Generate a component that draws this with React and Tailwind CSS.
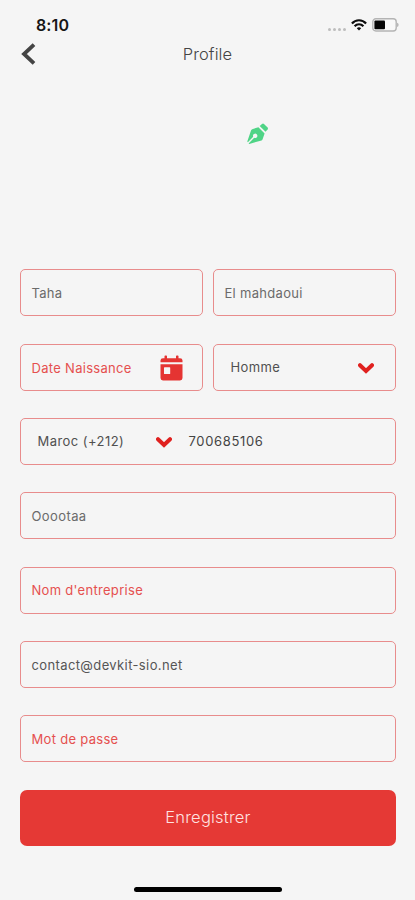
import React from 'react';

const StatusBar = () => (
  <div className="flex h-[38px] items-start justify-between pl-[36px] pr-[16px] pt-[15px]">
    <span className="text-[16px] font-semibold leading-[20px] tracking-[0.1px] text-[#161616]">8:10</span>
    <div className="flex h-[20px] items-center">
      <div className="mr-[5px] mt-[8px] flex gap-[2px]">
        <span className="size-[3px] rounded-full bg-[#bdbdbd]" />
        <span className="size-[3px] rounded-full bg-[#bdbdbd]" />
        <span className="size-[3px] rounded-full bg-[#bdbdbd]" />
        <span className="size-[3px] rounded-full bg-[#bdbdbd]" />
      </div>
      <svg className="h-[12px] w-[16px]" viewBox="0 0 16 12" fill="none" stroke="#0c0c0c" strokeWidth="2.2">
        <path d="M0.9 4.4C4.8 0.2 11.2 0.2 15.1 4.4" />
        <path d="M3.6 7.2C6 4.6 10 4.6 12.4 7.2" />
        <path d="M5.8 9.3C7 8 9 8 10.2 9.3L8 11.6Z" fill="#0c0c0c" stroke="none" />
      </svg>
      <svg className="ml-[5px] h-[14px] w-[27px]" viewBox="0 0 27 14">
        <rect x="0.8" y="0.8" width="23.4" height="12.2" rx="3" fill="#f8f8f8" stroke="#b4b4b4" strokeWidth="1.4" />
        <rect x="2.4" y="2.6" width="10.6" height="8.6" rx="1" fill="#050505" />
        <path d="M25.2 4.8C27 5.4 27 8.4 25.2 9Z" fill="#aaa" />
      </svg>
    </div>
  </div>
);

const Header = () => (
  <div className="grid h-[32px] grid-cols-[40px_1fr_40px] items-center">
    <svg className="ml-[21px] h-[22px] w-[15px]" viewBox="0 0 15 22" fill="none" stroke="#444" strokeWidth="3.8">
      <path d="M13 1.6L3 11L13 20.4" />
    </svg>
    <h1 className="text-center text-[16.5px] font-light leading-[20px] tracking-[0.1px] text-[#444]">Profile</h1>
  </div>
);

const Pen = () => (
  <svg className="ml-[247px] mt-[53px] h-[22px] w-[22px]" viewBox="0 0 22 22">
    <path
      fill="#4fd486"
      fillRule="evenodd"
      d="M11.4 4.2L17.6 10.4L15.6 16.3Q15.3 17.1 14.5 17.4L2.2 21L1.6 20.4L7.2 14.8A2.2 2.2 0 1 0 6.2 13.8L0.9 19.2L0.3 18.6L4.1 7.3Q4.4 6.5 5.2 6.2Z"
    />
    <path
      fill="#4fd486"
      d="M12.7 3.1L15 0.9Q16 0 17 0.9L20.6 4.5Q21.5 5.5 20.6 6.5L18.5 8.8Z"
    />
  </svg>
);

const Chevron = () => (
  <svg className="mt-[2px] h-[11px] w-[16px]" viewBox="0 0 16 11" fill="none" stroke="#e0211f" strokeWidth="4">
    <path d="M2 2.2L8 8L14 2.2" strokeLinecap="round" />
  </svg>
);

const Calendar = () => (
  <svg className="mt-[2px] h-[26px] w-[23px]" viewBox="0 0 23 26" fill="#e53432">
    <path d="M3 3.2H4.5V1.2Q4.5 0.4 5.3 0.4H6.2Q7 0.4 7 1.2V3.2H16V1.2Q16 0.4 16.8 0.4H17.7Q18.5 0.4 18.5 1.2V3.2H20Q22.5 3.2 22.5 5.6V7.3H0.5V5.6Q0.5 3.2 3 3.2Z" />
    <path
      fillRule="evenodd"
      d="M0.5 9.2H22.5V23Q22.5 25.4 20 25.4H3Q0.5 25.4 0.5 23ZM4 12.8V18.4Q4 19 4.6 19H9.6Q10.2 19 10.2 18.4V12.8Q10.2 12.2 9.6 12.2H4.6Q4 12.2 4 12.8Z"
    />
  </svg>
);

const Field = ({ children, className = '' }) => (
  <div
    className={`flex h-[47px] items-center rounded-[5px] border border-[#e88c8c] pl-[10.5px] text-[13px] leading-[18px] ${className}`}
  >
    {children}
  </div>
);

const App = () => {
  return (
    <main className="flex h-[900px] w-[415px] flex-col overflow-hidden bg-[#f5f5f5] font-['Inter',sans-serif]">
      <StatusBar />
      <Header />
      <div className="h-[199.3px]">
        <Pen />
      </div>

      <form className="flex flex-col gap-[27.35px] pl-[20px] pr-[19px]">
        <div className="grid grid-cols-2 gap-[10px]">
          <Field className="text-[#6b6b6b]">
            <span className="tracking-[0.3px]">Taha</span>
          </Field>
          <Field className="text-[#6b6b6b]">
            <span className="tracking-[0.3px]">El mahdaoui</span>
          </Field>
        </div>
        <div className="grid grid-cols-2 gap-[10px]">
          <Field className="justify-between pr-[19px] text-[#e5504f]">
            <span className="pt-[2px] tracking-[0.3px]">Date Naissance</span>
            <Calendar />
          </Field>
          <Field className="justify-between pr-[21px] text-[#505050]">
            <span className="pl-[6px] tracking-[0.4px]">Homme</span>
            <Chevron />
          </Field>
        </div>
        <Field className="text-[#505050]">
          <div className="flex w-[140px] items-center justify-between pl-[6px]">
            <span className="tracking-[0.45px]">Maroc (+212)</span>
            <Chevron />
          </div>
          <span className="pl-[17px] tracking-[0.65px] text-[#444]">700685106</span>
        </Field>
        <Field className="text-[#6b6b6b]">
          <span className="tracking-[0.4px]">Ooootaa</span>
        </Field>
        <Field className="text-[#e5504f]">
          <span className="tracking-[0.3px]">Nom d'entreprise</span>
        </Field>
        <Field className="text-[#555]">
          <span className="tracking-[0.38px]">contact@devkit-sio.net</span>
        </Field>
        <Field className="text-[#e5504f]">
          <span className="tracking-[0.3px]">Mot de passe</span>
        </Field>
        <button
          type="button"
          className="h-[56px] rounded-[7px] bg-[#e53935] text-[16.5px] font-light tracking-[0.2px] text-[#ffe3e1]"
        >
          Enregistrer
        </button>
      </form>

      <div className="mb-[8px] ml-[134px] mt-auto h-[5px] w-[148px] rounded-full bg-black" />
    </main>
  );
};

export default App;
